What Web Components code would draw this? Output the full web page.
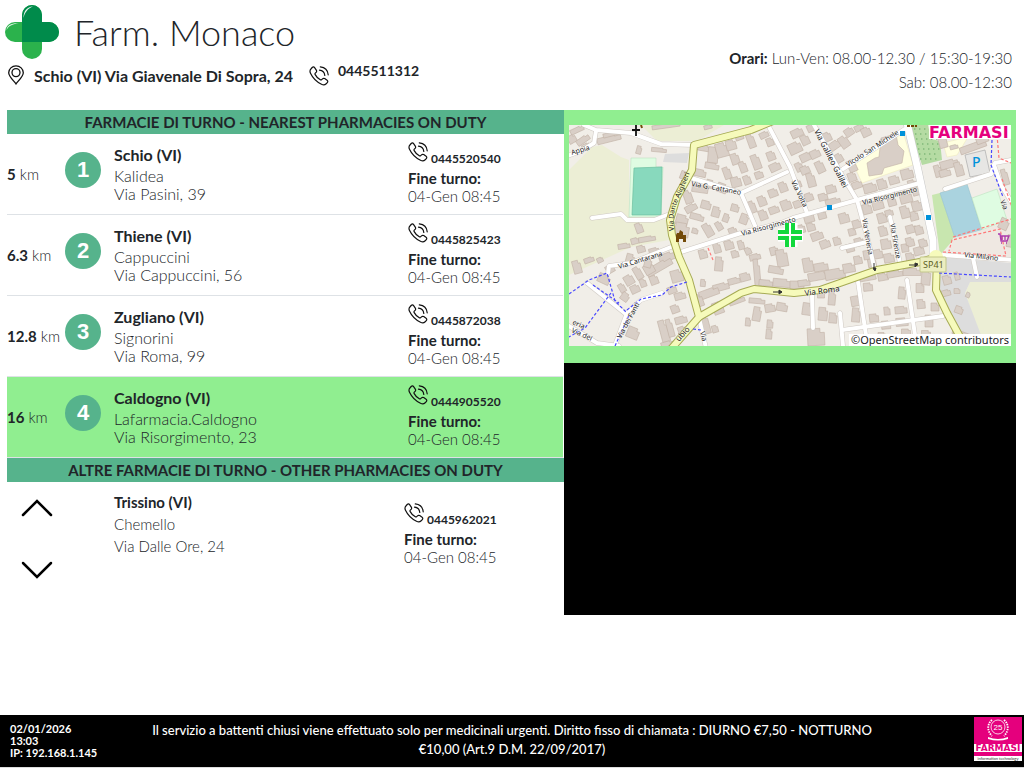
<!DOCTYPE html>
<html lang="it">
<head>
<meta charset="utf-8">
<title>Farm. Monaco</title>
<style>
  body { margin: 0; background: #fff; color: #212529; font-family: Lato, "Open Sans", sans-serif; font-size: 16px; }
</style>
</head>
<body>
<duty-board></duty-board>

<script>
const define = (name, html, setup) => {
  const template = document.createElement('template');
  template.innerHTML = html;
  customElements.define(name, class extends HTMLElement {
    static observedAttributes = ['tel'];
    constructor() {
      super();
      this.attachShadow({ mode: 'open' }).append(template.content.cloneNode(true));
    }
    connectedCallback() { if (setup) setup(this, this.shadowRoot); }
    attributeChangedCallback() { if (setup) setup(this, this.shadowRoot); }
  });
};

define('phone-icon', `
<style>:host{display:block;width:20px;height:20px;flex:none} svg{display:block;width:100%;height:100%}</style>
<svg viewBox="0 0 20 20" fill="none" stroke="#111" stroke-width="1.2" stroke-linecap="round" stroke-linejoin="round" aria-hidden="true">
  <path d="M1.900 3 3.200 1.500c.8-.8 1.800-.7 2.400.1l1.700 2.600c.5.8.4 1.600-.2 2.200l-.8.8c-.4.4-.4.900-.1 1.400 1.200 2.300 2.900 4 5.100 5.200.5.300 1 .2 1.400-.2l.8-.8c.6-.6 1.400-.7 2.200-.2l2.400 1.700c.8.600.9 1.600.2 2.300l-1.400 1.400c-1 1-2.700 1.100-4.400.3C8 16.100 3.700 12 1.500 7.300.7 5.500.9 4 1.900 3Z"/>
  <path d="M11.300.9c4.400.4 7.500 3.500 7.900 7.900M10.500 4.200c3 .3 5 2.300 5.300 5.300"/>
</svg>`);

define('pin-icon', `
<style>:host{display:block;width:16px;height:20px;flex:none} svg{display:block}</style>
<svg width="16" height="20" viewBox="0 0 16 20" fill="none" stroke="#111" stroke-width="1.300" aria-hidden="true">
  <path d="M8 19C6 16 .7 11.600.7 7.800a7.300 7 0 0 1 14.600 0C15.300 11.600 10 16 8 19Z"/><circle cx="8" cy="7.600" r="4"/>
</svg>`);

define('pharmacy-cross', `
<style>:host{display:block;flex:none} svg{display:block}</style>
<svg width="54" height="54" viewBox="0 0 54 54" role="img" aria-label="Farmacia">
  <rect x="0" y="17" width="54" height="20" rx="10" fill="#2bb24c"/>
  <rect x="17" y="0" width="20" height="54" rx="10" fill="#2bb24c"/>
  <path d="M17 37V10a10 10 0 0 1 20 0v7h7a10 10 0 0 1 0 20Z" fill="#008b4b"/>
  <path d="M18.500 13C18.500 6 22 2 28 1.600 23 3.500 20 7 18.500 13ZM1.500 25C2 20.500 6 18 14 18.300 8 19 4 20.500 1.500 25Z" fill="#fff" opacity=".9"/>
</svg>`);

define('board-header', `
<style>
  :host{display:grid;grid-template-columns:1fr auto;box-sizing:border-box;min-height:110px;padding:5px 12px 0 5px}
  .brand{display:flex;gap:15px;align-items:flex-start}
  h1{margin:0;font-weight:300;font-size:36px;line-height:54px}
  .contact{display:flex;margin:2px 0 0 3px;align-items:flex-start;font-weight:700;font-size:16px;line-height:20px}
  pin-icon{margin:4px 10px 0 0}
  .place{margin-top:5px}
  phone-icon{margin:5px 9px 0 16px}
  a{color:inherit;text-decoration:none;font-size:14px}
  .hours{margin:41px 0 0;font-weight:300;font-size:15px;line-height:24px;text-align:right}
  b{font-weight:700;font-size:15px}
</style>
<div>
  <div class="brand"><pharmacy-cross></pharmacy-cross><h1>Farm. Monaco</h1></div>
  <div class="contact"><pin-icon></pin-icon><span class="place">Schio (VI) Via Giavenale Di Sopra, 24</span><phone-icon></phone-icon><a href="tel:0445511312">0445511312</a></div>
</div>
<p class="hours"><b>Orari:</b> Lun-Ven: 08.00-12.30 / 15:30-19:30<br>Sab: 08.00-12:30</p>`);

define('section-title', `
<style>:host{display:block;background:#56b38c} h2{margin:0;font-weight:700;font-size:15px;line-height:24px;text-align:center}</style>
<h2><slot></slot></h2>`);

define('duty-contact', `
<style>
  :host{display:block;font-size:15px;line-height:18px}
  a{display:flex;height:20px;gap:3px;align-items:flex-start;color:inherit;text-decoration:none;font-size:12px;font-weight:700;margin-bottom:7px}
  a span{padding-top:8px}
  b,i{display:block;font-style:normal}
  b{font-weight:700}
  i{font-weight:300}
</style>
<a><phone-icon></phone-icon><span></span></a><b>Fine turno:</b><i><slot></slot></i>`,
(el, root) => {
  const tel = el.getAttribute('tel');
  root.querySelector('a').href = 'tel:' + tel;
  root.querySelector('span').textContent = tel;
});

define('duty-row', `
<style>
  :host{display:grid;grid-template-columns:58px 49px 1fr 155px;box-sizing:border-box;height:81px;margin-right:1px;border-bottom:1px solid #dee2e6;font-size:16px;line-height:18px}
  :host([selected]){background:#90ee90}
  .km{align-self:center;white-space:nowrap;font-weight:300;font-size:15px}
  b{font-weight:700}
  .n{width:36px;height:36px;margin-top:18px;border-radius:50%;background:#56b38c;color:#fff;font:700 22px/36px "Liberation Sans",sans-serif;text-align:center}
  .who{padding-top:12px;font-weight:300}
  h3{margin:0 0 3px;font-size:16px;font-weight:700;line-height:18px}
  duty-contact{padding-top:8px}
</style>
<div class="km"><b></b> km</div><div class="n"></div>
<div class="who"><h3></h3><div class="name"></div><div class="street"></div></div>
<duty-contact>04-Gen 08:45</duty-contact>`,
(el, root) => {
  const get = k => el.getAttribute(k);
  root.querySelector('b').textContent = get('km');
  root.querySelector('.n').textContent = get('n');
  root.querySelector('h3').textContent = get('town');
  root.querySelector('.name').textContent = get('name');
  root.querySelector('.street').textContent = get('street');
  root.querySelector('duty-contact').setAttribute('tel', get('tel'));
});

define('other-duty', `
<style>
  :host{display:grid;grid-template-columns:107px 1fr 160px;min-height:110px;font-size:15px}
  .nav{display:flex;flex-direction:column;gap:20px;padding:5px 0 0 9px;align-items:flex-start}
  button{border:0;background:none;padding:0;width:42px;height:42px;display:grid;place-items:center}
  .who{padding-top:9px;line-height:22px;font-weight:300}
  h3{margin:0;font-size:15px;font-weight:700}
  duty-contact{padding-top:21px}
</style>
<div class="nav">
  <button type="button" aria-label="Precedente"><svg width="32" height="18" viewBox="0 0 32 18" fill="none" stroke="#000" stroke-width="2.500" stroke-linecap="round"><path d="M2 16 16 2 30 16"/></svg></button>
  <button type="button" aria-label="Successiva"><svg width="32" height="18" viewBox="0 0 32 18" fill="none" stroke="#000" stroke-width="2.500" stroke-linecap="round"><path d="M2 2 16 16 30 2"/></svg></button>
</div>
<div class="who"><h3>Trissino (VI)</h3><div>Chemello</div><div>Via Dalle Ore, 24</div></div>
<duty-contact tel="0445962021">04-Gen 08:45</duty-contact>`);

/* Buildings: centre x, centre y, width, height, rotation */
const buildings = [
[8,5,14,5,-25],[3,14,8,8,-30],[14,15,14,6,-35],[17,21,8,5,-30],[40,14,24,6,-14],[43,9,18,4,-14],[97,1,28,4,-8],[139,2,8,4,-15],[70,25,5,8,15],[90,25,15,4,5],[135,23,12,6,10],[144,30,10,16,5],[143,41,14,6,10],[131,48,12,7,12],[131,64,16,7,8],[114,50,5,8,20],
[153,25,12,14,-15],[162,20,10,10,-15],[166,34,8,11,-18],[170,11,8,8,-20],[182,16,7,14,-20],[195,10,9,6,-25],[201,17,7,8,-20],[187,37,8,15,-20],[174,42,7,11,-20],[158,48,7,12,-20],[167,57,10,10,-15],[178,55,7,9,-20],[202,31,8,9,-20],[206,42,11,8,-25],[190,50,8,7,-20],[153,63,10,9,20],[141,59,8,8,15],
[119,72,8,13,-20],[122,83,12,7,-30],[128,92,14,6,15],[137,80,10,8,15],[147,87,8,10,15],[157,93,6,8,20],[166,83,8,7,15],[175,94,8,10,20],[183,82,7,12,-20],[193,76,8,10,-20],[204,68,9,8,-20],[214,62,8,10,-20],[194,90,8,10,-20],[205,85,10,7,-20],[217,80,10,10,-20],[139,105,8,14,-30],[150,101,6,9,-30],[164,107,8,9,-20],[113,95,12,10,15],[113,105,14,14,10],[70,103,7,10,-20],[126,106,6,5,15],
[228,8,12,8,-25],[236,15,8,10,-25],[226,23,13,11,-25],[237,32,12,8,-25],[230,42,7,9,-25],[236,45,9,8,-25],[242,55,8,14,-15],[228,59,8,8,-20],[240,72,8,8,-20],[229,79,9,7,-20],[254,72,9,7,-15],[264,77,15,7,-15],[262,64,10,8,-15],[251,42,8,12,-25],[246,29,10,8,-25],[242,3,8,7,-25],[258,12,8,9,-25],[266,20,12,8,-35],[275,17,9,12,-35],[280,7,9,8,-35],[290,3,9,6,-25],[297,7,9,9,-25],[270,33,7,9,-30],[283,41,8,12,-25],[283,52,8,9,-20],[288,60,10,7,-20],[301,63,13,9,-15],[313,59,9,10,-15],[325,55,10,8,-15],[338,49,12,10,-15],[343,59,8,8,-15],[298,84,9,10,-15],[309,80,11,9,-15],[323,77,8,8,-15],[337,73,12,10,-15],[347,66,7,9,-15],[348,81,10,10,-15],[345,91,8,9,-15],[336,87,9,12,-15],[313,93,9,10,-15],[320,88,8,6,-15],[314,106,8,10,-15],[342,104,10,8,-15],[350,105,8,9,-15],[341,117,8,9,-15],[354,118,8,8,-15],[350,126,10,8,-15],[275,93,10,10,-15],[288,99,9,8,-15],[283,107,7,7,-15],[253,90,8,8,-15],[240,93,10,9,-15],[232,104,8,8,-15],[242,102,8,8,-15],[248,111,12,8,-20],[256,119,10,8,-20],[290,117,9,8,-15],[281,123,8,8,-15],[268,116,7,8,-15],[317,119,10,10,-10],[309,129,9,9,-10],[320,133,10,9,-10],[341,132,8,8,-10],[336,123,7,8,-10],
[8,142,8,13,-15],[20,135,10,5,-20],[31,135,6,5,-25],[35,154,12,9,25],[41,144,8,8,-30],[55,121,12,5,-10],[66,116,8,6,-15],[78,114,17,5,-10],[72,124,8,7,-15],[61,134,8,10,15],[85,126,10,6,-15],[98,132,16,8,-20],[90,142,28,8,-30],[80,144,10,10,-30],[69,148,7,13,-30],[60,155,9,10,-30],[53,163,6,9,-30],[56,172,8,8,35],[66,164,9,8,-25],[74,158,6,8,-20],[85,155,8,9,-20],[79,138,7,9,15],[108,151,12,12,-15],[103,165,9,7,-20],[111,171,11,7,-15],[106,184,8,8,-20],[112,195,12,7,-15],[64,208,12,11,22],[95,206,8,22,-15],[101,203,6,18,-15],[113,205,8,7,-20],[98,219,12,5,-15],[134,129,8,9,-15],[148,123,7,10,-15],[150,139,8,14,5],[160,120,9,9,-15],[166,129,7,7,-15],[172,120,6,9,-15],[179,126,6,7,-25],[186,132,11,6,-15],[205,126,8,8,-15],[213,133,11,17,-10],[207,145,15,7,10],[188,148,6,28,-5],[176,152,10,8,-15],[165,156,12,6,-15],[152,162,16,7,-15],[140,168,20,8,-20],[129,176,10,12,-20],[134,158,5,7,5],[197,158,14,6,5],[213,158,18,8,5],[228,160,14,8,0],[149,183,10,12,-20],[168,176,16,5,-20],[136,199,8,20,-15],[146,204,6,7,-15],[188,176,16,5,5],[201,183,10,8,-10],[188,189,8,14,10],[179,197,5,8,5],[201,199,6,8,5],[200,209,6,10,5],[213,182,11,8,10],
[239,140,10,14,-10],[252,142,14,8,-10],[250,151,22,8,-10],[266,149,20,10,-10],[280,143,12,9,-10],[289,135,8,8,-10],[298,130,7,9,-10],[303,138,8,8,-10],[235,158,12,6,-8],[263,173,7,14,5],[252,169,7,8,0],[238,184,9,12,8],[254,189,9,13,5],[264,193,8,10,5],[287,176,10,10,-10],[287,190,8,14,5],[299,162,9,8,-5],[299,153,16,5,-10],[314,152,10,7,-10],[326,149,16,6,-10],[343,147,18,7,0],[357,152,9,16,5],[333,168,7,12,5],[332,185,12,7,-5],[318,186,6,8,-5],[305,193,9,8,-5],[317,200,9,8,-5],[333,197,12,8,-5],[351,163,8,9,0],[352,179,8,9,-5],[366,182,8,8,0],[360,196,8,12,0],[337,207,9,6,0],[357,209,9,7,0],[313,211,8,7,0],[247,212,17,17,-3],[378,155,8,9,-15],[377,168,9,6,-15],[388,166,6,5,0],[390,185,8,7,20],[399,170,4,5,25],[388,151,5,8,-15],[395,210,24,5,20],[369,46,7,12,-15],[380,39,18,8,-15],[390,44,8,14,-15],[376,48,11,7,-15],[373,14,8,18,-15],[404,22,27,7,-20],[413,14,12,8,-20],[435,99,9,11,25],[441,116,6,12,10],[436,52,6,16,-15],[385,22,8,4,-15]];

const roads = [
 'M15 0 27 5 62 8 92 19 125 20','M27 6 25 18 12 26-2 31','M112 127 172 108 212 98 224 93 288 75 351 58','M198-2 221 42 238 88','M244-2 274 52 288 75 299 115 306 146','M274 44 336 4','M122 53 172 68 218 47','M172 68 187 103','M321 92 331 138','M23 93 52 89 58 95 85 95 98 90','M102 122 62 138 40 141 39 148','M18 158 58 190','M45 223 58 188 72 175 93 168','M-2 200 28 218 50 221','M130 193 137 223','M289 157 297 210','M271 188 274 221','M273 205 374 191','M338 155 346 210','M243 170 244 203','M273 123 298 117','M374 130 401 132 444 135','M404 133 408 152','M376 64 422 49 425 40','M425 40 432 60 443 78','M426 38 442 35'];

const labels = [
 [3,30,-17,'Appia'],[122,61,10,'Via G. Cattaneo'],[173,111,-15,'Via Risorgimento'],[245,6,63,'Via Galileo Galilei',8],[279,42,-33,'Vicolo San Michele'],[222,57,64,'Via Volta'],[294,80,-14,'Via Risorgimento'],[293,94,80,'Via Veneria'],[321,99,80,'Via Firenze'],[50,144,-17,'Via Cantarana'],[52,214,-62,'Via dei Fanti'],[236,171,-8,'Via Roma',8],[395,132,6,'Via Milano'],[3,199,24,'eria'],[2,207,24,'Via dei'],[110,217,-48,'ubio',8],[131,207,76,'Via '],[431,76,68,'Via']];

define('street-map', `
<style>:host{display:block} svg{display:block;width:100%;height:auto}</style>
<svg viewBox="0 0 442 221" role="img" aria-label="Mappa della zona">
  <rect width="442" height="221" fill="#f1eee8"/>
  <g>
    <path fill="#eceed5" d="M0 45 23 22 33 20 52 32 60 35 60 92 98 95 100 115 62 122 0 150ZM72 0H155L128 16 88 16ZM401 157H442V221H415L396 168Z"/>
    <path fill="#dddddd" d="M371 132 442 138V157H401L396 168 412 210H392L371 165ZM96 29 120 28 118 38 94 37Z"/>
    <path fill="#b5dba3" d="M340 0H359L362 14 371 16 373 35 353 40Z"/>
    <path fill="#ffffe0" stroke="#eee8b8" stroke-width=".5" d="M284 38 334 7 344 40 293 58ZM374 18 399 12 388 30 378 32Z"/>
    <path fill="#c8e6af" d="M363 70 371 68 386 113 371 130Z"/>
    <path fill="#aad3df" stroke="#8bbcc8" stroke-width=".5" d="M371 68 398 59 413 105 386 113Z"/>
    <path fill="#dffce2" stroke="#b4dfb8" stroke-width=".5" d="M403 73 428 64 438 95 413 105ZM62 33H87V42H94L92 92H60Z"/>
    <path fill="#88d9bd" stroke="#6bbf9f" stroke-width=".7" d="M65 43 93 42 92 90 63 90Z"/>
    <path fill="#e7e6e4" stroke="#aaa" stroke-width=".7" d="M396 30 416 25 421 48 401 52Z"/>
    <path fill="#efe8e2" d="M384 113 413 105 442 96V133L380 129Z"/>
    <g fill="#6aa968" class="trees"></g>
  </g>
  <g fill="#d9cfc7" stroke="#c2b2a6" stroke-width=".6" class="houses">
    <path d="M312 13 327 9 329 20 335 26 333 38 315 43 313 49 300 51 298 38 306 33 310 32Z"/>
  </g>
  <g fill="none" stroke-linecap="round" stroke-linejoin="round" class="roads"></g>
  <g fill="none" stroke="#4848ff" stroke-width="1.200" stroke-dasharray="3 2">
    <path d="M0 169 20 155 38 148 46 176 58 188M24 160 50 178M42 168 16 203 0 212M58 185 72 174 93 170 102 162 118 157M370 148 442 152M46 221 60 190M423 15 422 40 434 72M124 204 132 205"/>
    <path stroke="#f77" d="M139 123 144 135M374 127 437 131 431 104 383 115 380 126M384 112 442 94M428 10 430 33 442 38M433 54 443 82"/>
  </g>
  <path id="dante" d="M105 106Q103 88 109 76T123 42" fill="none"/>
  <text font-family="Noto Sans" font-size="7" fill="#222"><textPath href="#dante">Via Dante Alighieri</textPath></text>
  <g font-family="Noto Sans" class="labels"></g>
  <g fill="#0092da"><rect x="331" y="6" width="5" height="5"/><rect x="258" y="80" width="5" height="5"/><rect x="357" y="90" width="5" height="5"/></g>
  <text x="403" y="42" fill="#0092da" font-family="Noto Sans" font-size="14" font-weight="500">P</text>
  <path d="M67 0V11M63 5H71" stroke="#111" stroke-width="1.800"/>
  <path d="M72 0l1 3M338 1h3M342 1h3M346 1h2" stroke="#734a08" stroke-width="2"/>
  <path fill="#734a08" d="M111 105l3 2v3h3v7h-3v-3h-4v3h-3v-7l1-2h2Z"/>
  <path d="M429 109h2l1 7h6l2-5h-9M432 118h1M437 118h1M433 111v4M436 111v4" fill="none" stroke="#ac39ac" stroke-width="1.300"/>
  <g stroke="#333" stroke-width="1"><path d="M204 167h9M340 140h9M305 138v7"/><path d="M213 167l-3-2v4ZM349 139l-3-1v4ZM306 146l-2-3h3Z" fill="#333"/></g>
  <rect x="351" y="132" width="26" height="15" rx="1" fill="#eceec0" stroke="#c3c78a"/>
  <text x="354" y="143" fill="#5c6022" font-family="Noto Sans" font-size="9">SP41</text>
  <g transform="translate(0 110)" fill="none">
    <path d="M209-3H219V-12M225-12V-3H234M234 3H225V12M219 12V3H209" stroke="#fff" stroke-width="7"/>
    <path d="M209-3H218V-12M224-12V-3H233M233 3H224V12M218 12V3H209" stroke="#12d83c" stroke-width="4"/>
  </g>
  <rect x="360" y="0" width="82" height="14" fill="#fff"/>
  <text x="360" y="13" fill="#e5007d" font-family="DejaVu Sans" font-weight="700" font-size="16">FARMASI</text>
  <rect x="280" y="209" width="162" height="12" fill="#fff"/>
  <text x="282" y="219" fill="#222" font-family="Noto Sans" font-size="11">©OpenStreetMap contributors</text>
</svg>`,
(el, root) => {
  const ns = 'http://www.w3.org/2000/svg';
  const add = (parent, tag, attrs, text) => {
    const node = document.createElementNS(ns, tag);
    for (const key in attrs) node.setAttribute(key, attrs[key]);
    if (text) node.textContent = text;
    root.querySelector(parent).append(node);
  };
  for (const [x, y, w, h, r] of buildings)
    add('.houses', 'path', { d: `M${-w/2} ${-h/2}H${w/4}V${-h/4}H${w/2}V${h/2}H${-w/2}Z`, transform: `translate(${x} ${y}) rotate(${r})` });
  for (let y = 4; y < 38; y += 5)
    for (let x = 345 + y / 5; x < (y < 14 ? 358 : 370); x += 5) add('.trees', 'circle', { cx: x, cy: y, r: .7 });
  const main = 'M338-2 349 45 364 115 364 128';
  const yellow = ['M204-4 182 5 125 20 123 45 108 72 101 95 103 110 110 132 120 155 130 192 102 224', 'M130 192 172 168 185 164 225 168 251 165 308 145 351 137 368 132 367 165 378 188 396 221'];
  for (const d of roads) add('.roads', 'path', { d, stroke: '#cfc9c3', 'stroke-width': 5 });
  add('.roads', 'path', { d: main, stroke: '#c8c8c8', 'stroke-width': 8 });
  for (const d of roads) add('.roads', 'path', { d, stroke: '#fff', 'stroke-width': 4 });
  add('.roads', 'path', { d: main, stroke: '#fff', 'stroke-width': 7 });
  for (const d of yellow) add('.roads', 'path', { d, stroke: '#a6aa54', 'stroke-width': 8 });
  for (const d of yellow) add('.roads', 'path', { d, stroke: '#f6fabb', 'stroke-width': 6 });
  add('.roads', 'circle', { cx: 367, cy: 132, r: 7, fill: '#f6fabb' });
  for (const [x, y, r, text, size] of labels)
    add('.labels', 'text', { transform: `translate(${x} ${y}) rotate(${r})`, 'font-size': size || 7, fill: '#222', stroke: '#fff', 'stroke-width': 1, 'stroke-opacity': .6, 'paint-order': 'stroke' }, text);
});

define('farmasi-badge', `
<style>:host{display:block} svg{display:block}</style>
<svg width="48" height="44" viewBox="0 0 48 44" role="img" aria-label="Farmasi information technology">
  <rect width="48" height="44" fill="#e5007d"/>
  <rect y="27" width="48" height="8" fill="#fff"/><rect y="39" width="48" height="5" fill="#fff"/>
  <circle cx="24" cy="10" r="7" fill="none" stroke="#fff" stroke-width=".8"/>
  <path d="M18 3C13 7 13 14 18 19M30 3C35 7 35 14 30 19" fill="none" stroke="#fff" stroke-width="1.800" stroke-dasharray="1.500 1"/>
  <path d="M14 20q10 4 20 0v2q-10 3-20 0Z" fill="#fff"/>
  <text x="24" y="13" text-anchor="middle" fill="#fff" font-family="Liberation Sans" font-size="8">25</text>
  <text x="24" y="34" text-anchor="middle" fill="#e5007d" font-family="DejaVu Sans" font-weight="700" font-size="9">FARMASI</text>
  <text x="24" y="43" text-anchor="middle" fill="#333" font-family="Lato" font-size="4">information technology</text>
</svg>`);

define('board-footer', `
<style>
  :host{display:grid;grid-template-columns:150px 1fr 150px;box-sizing:border-box;min-height:53px;background:#000;color:#fff;border-bottom:1px solid #ddd}
  .info{padding:8px 0 0 10px;font-size:11px;line-height:12px;font-weight:700}
  p{margin:0;padding-top:6px;font-size:13px;font-weight:500;line-height:19px;text-align:center}
  farmasi-badge{justify-self:end;padding:2px 2px 0 0}
</style>
<div class="info"><div>02/01/2026</div><div>13:03</div><div>IP: 192.168.1.145</div></div>
<p>Il servizio a battenti chiusi viene effettuato solo per medicinali urgenti. Diritto fisso di chiamata : DIURNO €7,50 - NOTTURNO<br>€10,00 (Art.9 D.M. 22/09/2017)</p>
<farmasi-badge></farmasi-badge>`);

define('duty-board', `
<style>
  :host{display:flex;flex-direction:column;min-height:100vh}
  main{flex:1;display:grid;grid-template-columns:557fr 452fr;align-items:start;padding:0 8px 0 7px}
  .map{background:#90ee90;padding:15px 5px 17px}
  .screen{background:#000;height:252px}
</style>
<board-header></board-header>
<main>
  <section>
    <section-title>FARMACIE DI TURNO - NEAREST PHARMACIES ON DUTY</section-title>
    <duty-row km="5" n="1" town="Schio (VI)" name="Kalidea" street="Via Pasini, 39" tel="0445520540"></duty-row>
    <duty-row km="6.3" n="2" town="Thiene (VI)" name="Cappuccini" street="Via Cappuccini, 56" tel="0445825423"></duty-row>
    <duty-row km="12.8" n="3" town="Zugliano (VI)" name="Signorini" street="Via Roma, 99" tel="0445872038"></duty-row>
    <duty-row selected km="16" n="4" town="Caldogno (VI)" name="Lafarmacia.Caldogno" street="Via Risorgimento, 23" tel="0444905520"></duty-row>
    <section-title>ALTRE FARMACIE DI TURNO - OTHER PHARMACIES ON DUTY</section-title>
    <other-duty></other-duty>
  </section>
  <aside>
    <div class="map"><street-map></street-map></div>
    <div class="screen"></div>
  </aside>
</main>
<board-footer></board-footer>`);
</script>
</body>
</html>
